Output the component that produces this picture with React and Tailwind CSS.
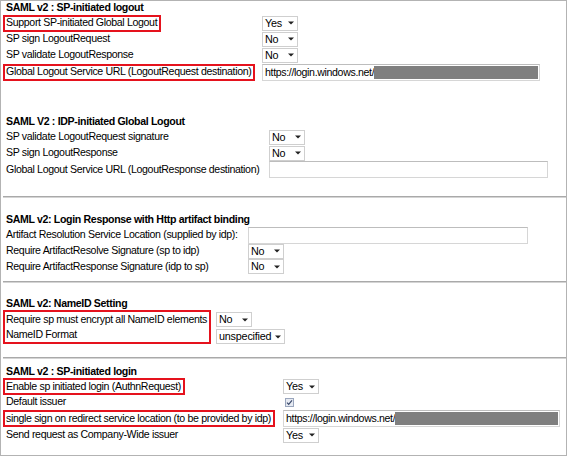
import React from 'react';

const Caret = () => (
    <svg width="6" height="4" viewBox="0 0 6 4" className="ml-auto shrink-0">
        <path d="M0 0.5 L6 0.5 L3 3.5 Z" fill="#222" />
    </svg>
);

const Select = ({ value, w = 'w-[36px]' }) => (
    <div className={`${w} h-[15px] flex items-center pl-[2px] pr-[3px] bg-white border border-[#cfcfcf] text-[10.8px] tracking-[-0.2px] leading-none text-black`}>
        <span>{value}</span>
        <Caret />
    </div>
);

const TextBox = ({ w, url }) => (
    <div className={`${w} h-[17px] flex items-center bg-white border border-[#d6d6d6] border-t-[#bdbdbd] pl-[2px] pr-[1px] leading-none text-black`}>
        {url && (
            <>
                <span>https://login.windows.net/</span>
                <div className="flex-1 h-[13px] bg-[#7f7f7f]" />
            </>
        )}
    </div>
);

const Label = ({ children, red }) =>
    red ? (
        <span className="inline-flex items-center h-[17px] border-2 border-[#e5121d] pl-[1px] pr-[2px] whitespace-nowrap">{children}</span>
    ) : (
        <span className="pl-[3px] whitespace-nowrap">{children}</span>
    );

const Row = ({ label, red, lw, h = 'h-[16px]', children }) => (
    <div className={`flex items-center ${h}`}>
        <div className={`${lw} shrink-0 flex items-center`}>
            <Label red={red}>{label}</Label>
        </div>
        {children}
    </div>
);

const Title = ({ children, h = 'h-[14px]' }) => (
    <div className={`${h} flex items-center pl-[3px] font-bold whitespace-nowrap`}>{children}</div>
);

const Rule = ({ mt }) => <div className={`${mt} ml-[2px] h-[2px] bg-[#a9a9a9] border-b border-[#d4d4d4]`} />;

export default function App() {
    return (
        <div className="w-[567px] h-[456px] bg-white border border-[#b3b3b3] overflow-hidden text-[10.6px] tracking-[-0.35px] text-black font-['Liberation_Sans',Arial,sans-serif]">
            <div className="pl-[2px]">
                {/* SP-initiated logout */}
                <Title>SAML v2 : SP-initiated logout</Title>
                <Row label="Support SP-initiated Global Logout" red lw="w-[259px]"><Select value="Yes" /></Row>
                <Row label="SP sign LogoutRequest" lw="w-[259px]"><Select value="No" /></Row>
                <Row label="SP validate LogoutResponse" lw="w-[259px]"><Select value="No" /></Row>
                <Row label="Global Logout Service URL (LogoutRequest destination)" red lw="w-[259px]" h="h-[18px]">
                    <TextBox w="w-[278px]" url />
                </Row>

                {/* IDP-initiated Global Logout */}
                <div className="mt-[34px]">
                    <Title>SAML V2 : IDP-initiated Global Logout</Title>
                    <Row label="SP validate LogoutRequest signature" lw="w-[266px]"><Select value="No" /></Row>
                    <Row label="SP sign LogoutResponse" lw="w-[266px]"><Select value="No" /></Row>
                    <Row label="Global Logout Service URL (LogoutResponse destination)" lw="w-[266px]" h="h-[17px]">
                        <TextBox w="w-[279px]" />
                    </Row>
                </div>
            </div>

            <Rule mt="mt-[18px]" />

            <div className="pl-[2px]">
                <div className="mt-[15px]">
                    <Title>SAML v2: Login Response with Http artifact binding</Title>
                    <Row label="Artifact Resolution Service Location (supplied by idp):" lw="w-[245px]"><TextBox w="w-[280px]" /></Row>
                    <Row label="Require ArtifactResolve Signature (sp to idp)" lw="w-[245px]"><Select value="No" /></Row>
                    <Row label="Require ArtifactResponse Signature (idp to sp)" lw="w-[245px]" h="h-[15px]"><Select value="No" /></Row>
                </div>
            </div>

            <Rule mt="mt-[7px]" />

            <div className="pl-[2px]">
                <div className="mt-[15px]">
                    <Title h="h-[12px]">SAML v2: NameID Setting</Title>
                    <div className="flex">
                        <div className="w-[208px] border-2 border-[#e5121d] pl-[1px] flex flex-col">
                            <div className="h-[15px] flex items-center whitespace-nowrap">Require sp must encrypt all NameID elements</div>
                            <div className="h-[15px] flex items-center whitespace-nowrap">NameID Format</div>
                        </div>
                        <div className="ml-[5px] flex flex-col pt-[2px] gap-[2px]">
                            <Select value="No" />
                            <Select value="unspecified" w="w-[69px]" />
                        </div>
                    </div>
                </div>
            </div>

            <Rule mt="mt-[13px]" />

            <div className="pl-[2px]">
                <div className="mt-[6px]">
                    <Title>SAML v2 : SP-initiated login</Title>
                    <Row label="Enable sp initiated login (AuthnRequest)" red lw="w-[280px]" h="h-[15px]"><Select value="Yes" /></Row>
                    <Row label="Default issuer" lw="w-[280px]">
                        <svg width="9" height="9" viewBox="0 0 9 9" className="ml-[2px]">
                            <rect x="0.5" y="0.5" width="8" height="8" fill="#e6eaf2" stroke="#9aa6bd" />
                            <path d="M2 4.6 L3.7 6.3 L7 2.4" fill="none" stroke="#3b4a6b" strokeWidth="1.2" />
                        </svg>
                    </Row>
                    <Row label="single sign on redirect service location (to be provided by idp)" red lw="w-[280px]" h="h-[17px]">
                        <TextBox w="w-[277px]" url />
                    </Row>
                    <Row label="Send request as Company-Wide issuer" lw="w-[280px]"><Select value="Yes" /></Row>
                </div>
            </div>
        </div>
    );
}
